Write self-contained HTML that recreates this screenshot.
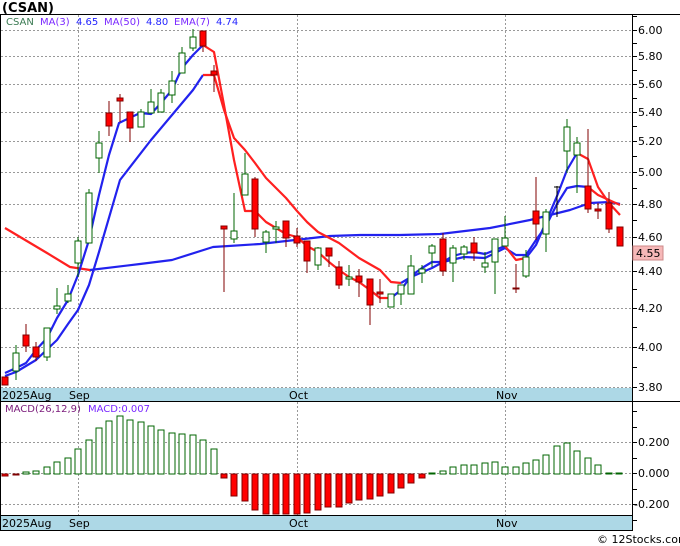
<!DOCTYPE html>
<html><head><meta charset="utf-8"><style>
html,body{margin:0;padding:0;background:#fff;width:680px;height:546px;overflow:hidden}
svg{display:block}
text{font-family:"DejaVu Sans","Liberation Sans",sans-serif}
</style></head><body>
<svg width="680" height="546" viewBox="0 0 680 546" xmlns="http://www.w3.org/2000/svg">
<text x="2" y="12" font-size="13" font-weight="bold" fill="#000" font-family="Liberation Sans,sans-serif">(CSAN)</text>
<!-- frames -->
<line x1="0" y1="14.5" x2="680" y2="14.5" stroke="#000"/>
<line x1="0.5" y1="14" x2="0.5" y2="531" stroke="#000"/>
<line x1="632.5" y1="14" x2="632.5" y2="531" stroke="#000"/>
<!-- grid main -->
<g stroke="#999" stroke-dasharray="2,2" stroke-width="1">
<line x1="1" y1="30.5" x2="632" y2="30.5"/><line x1="1" y1="56.5" x2="632" y2="56.5"/><line x1="1" y1="84.5" x2="632" y2="84.5"/><line x1="1" y1="112.5" x2="632" y2="112.5"/><line x1="1" y1="141.5" x2="632" y2="141.5"/><line x1="1" y1="172.5" x2="632" y2="172.5"/><line x1="1" y1="204.5" x2="632" y2="204.5"/><line x1="1" y1="237.5" x2="632" y2="237.5"/><line x1="1" y1="271.5" x2="632" y2="271.5"/><line x1="1" y1="308.5" x2="632" y2="308.5"/><line x1="1" y1="347.5" x2="632" y2="347.5"/><line x1="1" y1="387.5" x2="632" y2="387.5"/>
<line x1="78.5" y1="15" x2="78.5" y2="400"/><line x1="297.5" y1="15" x2="297.5" y2="400"/><line x1="505.5" y1="15" x2="505.5" y2="400"/>
<line x1="1" y1="442.5" x2="632" y2="442.5"/><line x1="1" y1="473.5" x2="632" y2="473.5"/><line x1="1" y1="504.5" x2="632" y2="504.5"/>
<line x1="78.5" y1="402" x2="78.5" y2="530"/><line x1="297.5" y1="402" x2="297.5" y2="530"/><line x1="505.5" y1="402" x2="505.5" y2="530"/>
</g>
<!-- axis ticks -->
<g stroke="#000">
<line x1="632" y1="16.5" x2="637" y2="16.5"/><line x1="632" y1="30.5" x2="637" y2="30.5"/><line x1="632" y1="43.5" x2="637" y2="43.5"/><line x1="632" y1="56.5" x2="637" y2="56.5"/><line x1="632" y1="70.5" x2="637" y2="70.5"/><line x1="632" y1="84.5" x2="637" y2="84.5"/><line x1="632" y1="98.5" x2="637" y2="98.5"/><line x1="632" y1="112.5" x2="637" y2="112.5"/><line x1="632" y1="126.5" x2="637" y2="126.5"/><line x1="632" y1="141.5" x2="637" y2="141.5"/><line x1="632" y1="156.5" x2="637" y2="156.5"/><line x1="632" y1="172.5" x2="637" y2="172.5"/><line x1="632" y1="188.5" x2="637" y2="188.5"/><line x1="632" y1="204.5" x2="637" y2="204.5"/><line x1="632" y1="220.5" x2="637" y2="220.5"/><line x1="632" y1="237.5" x2="637" y2="237.5"/><line x1="632" y1="254.5" x2="637" y2="254.5"/><line x1="632" y1="271.5" x2="637" y2="271.5"/><line x1="632" y1="289.5" x2="637" y2="289.5"/><line x1="632" y1="308.5" x2="637" y2="308.5"/><line x1="632" y1="327.5" x2="637" y2="327.5"/><line x1="632" y1="347.5" x2="637" y2="347.5"/><line x1="632" y1="367.5" x2="637" y2="367.5"/><line x1="632" y1="387.5" x2="637" y2="387.5"/>
<line x1="632" y1="411.5" x2="637" y2="411.5"/><line x1="632" y1="427.5" x2="637" y2="427.5"/><line x1="632" y1="442.5" x2="637" y2="442.5"/><line x1="632" y1="458.5" x2="637" y2="458.5"/><line x1="632" y1="473.5" x2="637" y2="473.5"/><line x1="632" y1="489.5" x2="637" y2="489.5"/><line x1="632" y1="504.5" x2="637" y2="504.5"/><line x1="632" y1="520.5" x2="637" y2="520.5"/>
</g>
<g font-size="11" fill="#000">
<text x="638" y="34">6.00</text><text x="638" y="60">5.80</text><text x="638" y="88">5.60</text><text x="638" y="116">5.40</text><text x="638" y="145">5.20</text><text x="638" y="176">5.00</text><text x="638" y="208">4.80</text><text x="638" y="241">4.60</text><text x="638" y="275">4.40</text><text x="638" y="312">4.20</text><text x="638" y="351">4.00</text><text x="638" y="391">3.80</text>
<text x="638" y="446">0.200</text><text x="638" y="477">0.000</text><text x="634" y="508">-0.200</text>
</g>
<rect x="633" y="246" width="30" height="14" fill="#f6b8b8" stroke="#c88"/>
<text x="636" y="257" font-size="11" fill="#000">4.55</text>
<!-- date bars -->
<rect x="1" y="388" width="631" height="13" fill="#add8e6"/>
<line x1="0" y1="401.5" x2="680" y2="401.5" stroke="#000"/>
<rect x="1" y="516" width="631" height="14" fill="#add8e6"/>
<line x1="0" y1="530.5" x2="633" y2="530.5" stroke="#000"/>
<line x1="0" y1="515.5" x2="632" y2="515.5" stroke="#000"/>
<g font-size="11" fill="#000">
<text x="2" y="399">2025Aug</text><text x="69" y="399">Sep</text><text x="289" y="399">Oct</text><text x="496" y="399">Nov</text>
<text x="2" y="527">2025Aug</text><text x="69" y="527">Sep</text><text x="289" y="527">Oct</text><text x="496" y="527">Nov</text>
</g>
<text x="6" y="25" font-size="10" fill="#3a7a52">CSAN</text>
<text x="40" y="25" font-size="10" fill="#7a28ff">MA(3)</text><text x="76" y="25" font-size="10" fill="#2424ff">4.65</text>
<text x="104" y="25" font-size="10" fill="#7a28ff">MA(50)</text><text x="146" y="25" font-size="10" fill="#2424ff">4.80</text>
<text x="174" y="25" font-size="10" fill="#7a28ff">EMA(7)</text><text x="216" y="25" font-size="10" fill="#2424ff">4.74</text>
<text x="5" y="412" font-size="10" fill="#7a1a7a">MACD(26,12,9)</text><text x="88" y="412" font-size="10" fill="#7a28ff">MACD:0.007</text>
<text x="597" y="543" font-size="11" fill="#000">© 12Stocks.com</text>
<!-- MA lines -->
<g fill="none" stroke-width="2.2" stroke-linejoin="round">
<polyline stroke="#ff2020" points="5,228 47,253 70,267 90,270"/>
<polyline stroke="#2222ee" points="90,270 140,264 172,260 213,247 260,244 330,236 360,235 400,235 440,234 490,228 530,220 570,210 590,203 610,202 620,204"/>
<polyline stroke="#2222ee" points="5,376 16,372 36,360 57,340 68,324 78,310 89,285 99,252 120,180 151,140 172,115 193,90 203,75"/>
<polyline stroke="#ff2020" points="203,75 214,75 224,110 234,138 245,150 255,163 266,178 286,198 297,211 307,222 318,232 339,243 359,258 380,270 391,282 401,283"/>
<polyline stroke="#2222ee" points="401,283 411,277 432,268 443,262 464,257 485,258 505,248 516,255 526,255 536,240 546,226 557,204 567,188 577,186 588,187"/>
<polyline stroke="#ff2020" points="588,187 598,195 620,205"/>
<polyline stroke="#2222ee" points="5,373 16,368 26,363 36,350 47,338 57,318 68,300 78,275 89,240 99,195 109,155 119,123 140,113 151,114 161,103 172,90 182,68 193,55 203,45"/>
<polyline stroke="#ff2020" points="203,45 214,52 224,105 234,160 245,211 255,211 266,222 276,228 286,234 297,237 307,246 318,252 329,262 339,270 349,277 359,282 370,290 380,298 391,298"/>
<polyline stroke="#2222ee" points="391,298 401,290 411,276 422,268 432,262 443,262 453,256 464,253 474,252 485,254 495,250 505,246"/>
<polyline stroke="#ff2020" points="505,246 516,260 526,258"/>
<polyline stroke="#2222ee" points="526,258 536,245 546,222 557,196 567,170 577,153"/>
<polyline stroke="#ff2020" points="577,153 588,159 598,187 609,203 620,215"/>
</g>
<!-- candles -->
<g stroke-width="1">
<g stroke="#006400" fill="#fff">
<line x1="16" y1="345" x2="16" y2="380"/><rect x="13" y="353" width="6" height="18"/>
<line x1="47" y1="328" x2="47" y2="361"/><rect x="44" y="328" width="6" height="29"/>
<line x1="57" y1="288" x2="57" y2="314"/><rect x="54" y="306" width="6" height="3"/>
<line x1="68" y1="285" x2="68" y2="303"/><rect x="65" y="294" width="6" height="7"/>
<line x1="78" y1="237" x2="78" y2="277"/><rect x="75" y="241" width="6" height="22"/>
<line x1="89" y1="189" x2="89" y2="243"/><rect x="86" y="193" width="6" height="50"/>
<line x1="99" y1="131" x2="99" y2="173"/><rect x="96" y="143" width="6" height="15"/>
<line x1="141" y1="109" x2="141" y2="127"/><rect x="138" y="112" width="6" height="15"/>
<line x1="151" y1="89" x2="151" y2="113"/><rect x="148" y="102" width="6" height="11"/>
<line x1="161" y1="89" x2="161" y2="112"/><rect x="158" y="93" width="6" height="19"/>
<line x1="172" y1="71" x2="172" y2="103"/><rect x="169" y="81" width="6" height="14"/>
<line x1="182" y1="47" x2="182" y2="73"/><rect x="179" y="53" width="6" height="20"/>
<line x1="193" y1="29" x2="193" y2="51"/><rect x="190" y="37" width="6" height="11"/>
<line x1="234" y1="193" x2="234" y2="243"/><rect x="231" y="231" width="6" height="8"/>
<line x1="245" y1="153" x2="245" y2="195"/><rect x="242" y="174" width="6" height="21"/>
<line x1="266" y1="230" x2="266" y2="253"/><rect x="263" y="232" width="6" height="10"/>
<line x1="276" y1="221" x2="276" y2="243"/><rect x="273" y="227" width="6" height="2"/>
<line x1="318" y1="247" x2="318" y2="270"/><rect x="315" y="248" width="6" height="17"/>
<line x1="349" y1="265" x2="349" y2="286"/><rect x="346" y="277" width="6" height="2"/>
<line x1="391" y1="294" x2="391" y2="307"/><rect x="388" y="294" width="6" height="13"/>
<line x1="401" y1="285" x2="401" y2="305"/><rect x="398" y="285" width="6" height="9"/>
<line x1="411" y1="255" x2="411" y2="294"/><rect x="408" y="266" width="6" height="28"/>
<line x1="422" y1="265" x2="422" y2="283"/><rect x="419" y="269" width="6" height="4"/>
<line x1="432" y1="244" x2="432" y2="267"/><rect x="429" y="246" width="6" height="7"/>
<line x1="453" y1="245" x2="453" y2="282"/><rect x="450" y="248" width="6" height="15"/>
<line x1="464" y1="245" x2="464" y2="260"/><rect x="461" y="247" width="6" height="7"/>
<line x1="485" y1="252" x2="485" y2="273"/><rect x="482" y="263" width="6" height="4"/>
<line x1="495" y1="239" x2="495" y2="294"/><rect x="492" y="239" width="6" height="23"/>
<line x1="505" y1="216" x2="505" y2="246"/><rect x="502" y="238" width="6" height="8"/>
<line x1="526" y1="250" x2="526" y2="278"/><rect x="523" y="257" width="6" height="19"/>
<line x1="546" y1="209" x2="546" y2="252"/><rect x="543" y="212" width="6" height="22"/>
<line x1="567" y1="119" x2="567" y2="173"/><rect x="564" y="127" width="6" height="24"/>
<line x1="577" y1="137" x2="577" y2="193"/><rect x="574" y="143" width="6" height="12"/>
</g>
<g stroke="#000"><line x1="557" y1="186" x2="557" y2="217"/><line x1="554" y1="187" x2="560" y2="187"/></g>
<g stroke="#800000" fill="#ff0000">
<rect x="2" y="377" width="6" height="8"/>
<line x1="26" y1="324" x2="26" y2="352"/><rect x="23" y="335" width="6" height="11"/>
<line x1="36" y1="342" x2="36" y2="361"/><rect x="33" y="347" width="6" height="10"/>
<line x1="109" y1="101" x2="109" y2="136"/><rect x="106" y="113" width="6" height="13"/>
<line x1="120" y1="94" x2="120" y2="122"/><rect x="117" y="98" width="6" height="3"/>
<line x1="130" y1="112" x2="130" y2="142"/><rect x="127" y="112" width="6" height="16"/>
<line x1="203" y1="31" x2="203" y2="52"/><rect x="200" y="31" width="6" height="15"/>
<line x1="214" y1="65" x2="214" y2="92"/><rect x="211" y="71" width="6" height="4"/>
<line x1="224" y1="226" x2="224" y2="292"/><rect x="221" y="226" width="6" height="3"/>
<line x1="255" y1="177" x2="255" y2="237"/><rect x="252" y="179" width="6" height="50"/>
<line x1="286" y1="221" x2="286" y2="247"/><rect x="283" y="221" width="6" height="17"/>
<line x1="297" y1="228" x2="297" y2="247"/><rect x="294" y="236" width="6" height="7"/>
<line x1="307" y1="241" x2="307" y2="273"/><rect x="304" y="241" width="6" height="20"/>
<line x1="329" y1="248" x2="329" y2="267"/><rect x="326" y="248" width="6" height="8"/>
<line x1="339" y1="261" x2="339" y2="289"/><rect x="336" y="267" width="6" height="18"/>
<line x1="359" y1="269" x2="359" y2="297"/><rect x="356" y="276" width="6" height="6"/>
<line x1="370" y1="279" x2="370" y2="325"/><rect x="367" y="279" width="6" height="26"/>
<line x1="380" y1="279" x2="380" y2="303"/><rect x="377" y="292" width="6" height="2"/>
<line x1="443" y1="233" x2="443" y2="276"/><rect x="440" y="239" width="6" height="32"/>
<line x1="474" y1="237" x2="474" y2="261"/><rect x="471" y="243" width="6" height="10"/>
<line x1="516" y1="264" x2="516" y2="293"/><rect x="513" y="288" width="6" height="1"/>
<line x1="536" y1="177" x2="536" y2="240"/><rect x="533" y="211" width="6" height="13"/>
<line x1="588" y1="129" x2="588" y2="213"/><rect x="585" y="186" width="6" height="23"/>
<line x1="598" y1="203" x2="598" y2="219"/><rect x="595" y="209" width="6" height="2"/>
<line x1="609" y1="192" x2="609" y2="233"/><rect x="606" y="203" width="6" height="26"/>
<rect x="617" y="227" width="6" height="19"/>
</g>
<!-- MACD -->
<g stroke="#006400" fill="#fff">
<rect x="23" y="472" width="6" height="2"/><rect x="33" y="471" width="6" height="3"/><rect x="44" y="467" width="6" height="7"/><rect x="54" y="462" width="6" height="12"/><rect x="65" y="458" width="6" height="16"/><rect x="75" y="449" width="6" height="25"/><rect x="86" y="440" width="6" height="34"/><rect x="96" y="428" width="6" height="46"/><rect x="106" y="421" width="6" height="53"/><rect x="117" y="416" width="6" height="58"/><rect x="127" y="420" width="6" height="54"/><rect x="138" y="422" width="6" height="52"/><rect x="148" y="426" width="6" height="48"/><rect x="158" y="430" width="6" height="44"/><rect x="169" y="433" width="6" height="41"/><rect x="179" y="434" width="6" height="40"/><rect x="190" y="435" width="6" height="39"/><rect x="200" y="440" width="6" height="34"/><rect x="211" y="449" width="6" height="25"/>
<rect x="429" y="473" width="6" height="1"/><rect x="440" y="471" width="6" height="3"/><rect x="450" y="467" width="6" height="7"/><rect x="461" y="465" width="6" height="9"/><rect x="471" y="465" width="6" height="9"/><rect x="482" y="463" width="6" height="11"/><rect x="492" y="462" width="6" height="12"/><rect x="502" y="467" width="6" height="7"/><rect x="513" y="467" width="6" height="7"/><rect x="523" y="463" width="6" height="11"/><rect x="533" y="460" width="6" height="14"/><rect x="543" y="455" width="6" height="19"/><rect x="554" y="446" width="6" height="28"/><rect x="564" y="443" width="6" height="31"/><rect x="574" y="451" width="6" height="23"/><rect x="585" y="458" width="6" height="16"/><rect x="595" y="465" width="6" height="9"/><rect x="606" y="473" width="6" height="1"/><rect x="616" y="473" width="6" height="1"/>
</g>
<g stroke="#800000" fill="#ff0000">
<rect x="2" y="474" width="6" height="2"/><rect x="13" y="474" width="6" height="1"/>
<rect x="221" y="474" width="6" height="4"/><rect x="231" y="474" width="6" height="22"/><rect x="242" y="474" width="6" height="27"/><rect x="252" y="474" width="6" height="36"/><rect x="263" y="474" width="6" height="40"/><rect x="273" y="474" width="6" height="40"/><rect x="283" y="474" width="6" height="40"/><rect x="294" y="474" width="6" height="40"/><rect x="304" y="474" width="6" height="39"/><rect x="315" y="474" width="6" height="36"/><rect x="325" y="474" width="6" height="33"/><rect x="336" y="474" width="6" height="33"/><rect x="346" y="474" width="6" height="29"/><rect x="356" y="474" width="6" height="26"/><rect x="367" y="474" width="6" height="25"/><rect x="377" y="474" width="6" height="22"/><rect x="388" y="474" width="6" height="19"/><rect x="398" y="474" width="6" height="14"/><rect x="408" y="474" width="6" height="9"/><rect x="419" y="474" width="6" height="4"/>
</g>
</g>
</svg>
</body></html>
